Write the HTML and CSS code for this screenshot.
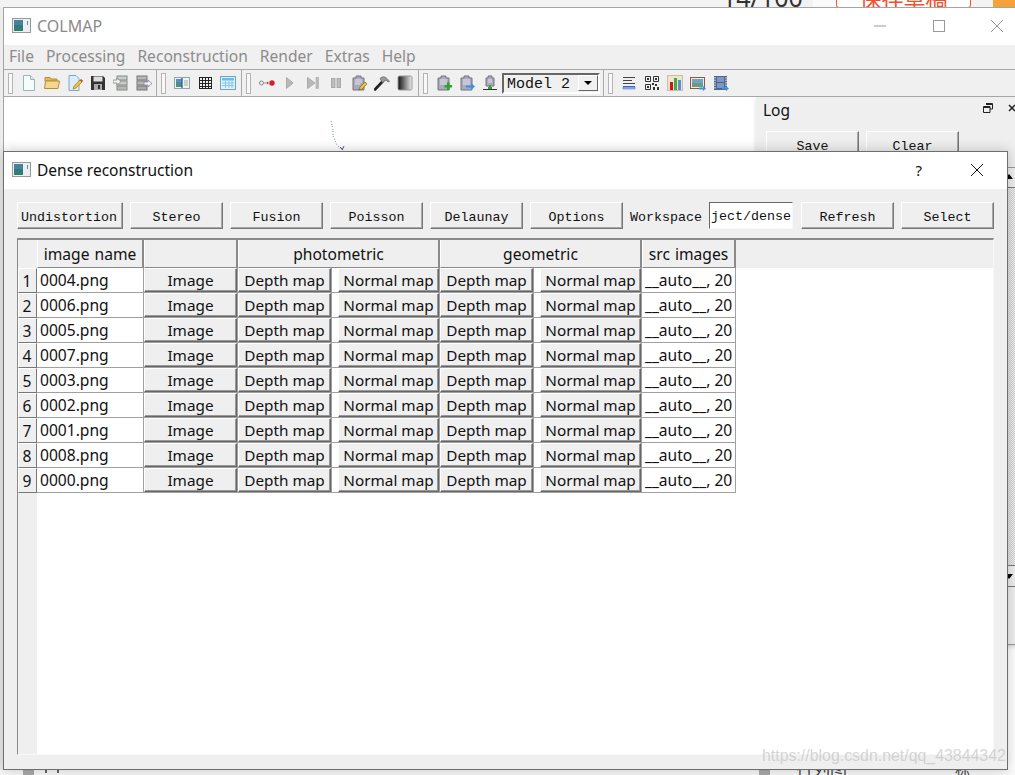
FILE: index.html
```html
<!DOCTYPE html>
<html lang="en">
<head>
  <meta charset="UTF-8" />
  <title>COLMAP</title>
  <link rel="stylesheet" href="styles.css">
</head>
<body>
  <!-- stuff behind the colmap window -->
  <div class="behind-top">
    <span class="behind-count">14/100</span>
    <span class="behind-sep"></span>
    <span class="behind-btn">保存草稿</span>
    <span class="behind-orange"></span>
  </div>

  <div class="main-win">
    <div class="titlebar">
      <svg class="app-icon" width="19" height="15" viewBox="0 0 19 15"><rect x=".5" y=".5" width="18" height="14" fill="#eee" stroke="#9a9a9a"/><rect x="2" y="2" width="9" height="11" fill="#2f7f74"/><rect x="2" y="2" width="9" height="5" fill="#4a7fa0"/><rect x="15" y="3" width="1" height="4" fill="#4aa0a0"/></svg>
      <span class="win-title main-title">COLMAP</span>
      <div class="win-ctrls">
        <svg width="12" height="12" viewBox="0 0 12 12"><path d="M0 6h12" stroke="#999"/></svg>
        <svg width="12" height="12" viewBox="0 0 12 12"><rect x=".5" y=".5" width="11" height="11" fill="none" stroke="#999"/></svg>
        <svg width="12" height="12" viewBox="0 0 12 12"><path d="M0 0l12 12M12 0L0 12" stroke="#999"/></svg>
      </div>
    </div>
    <div class="menubar">
      <span>File</span><span>Processing</span><span>Reconstruction</span><span>Render</span><span>Extras</span><span>Help</span>
    </div>
    <div class="toolbar">
      <div class="tb-group g1">
        <i class="handle"></i>
        <span class="tool"><svg viewBox="0 0 16 16"><path d="M2.500 .5h7l4 4v11h-11z" fill="#f6fbfb" stroke="#9db4b4"/><path d="M9.500 .5v4h4" fill="#dfe9e9" stroke="#9db4b4"/></svg></span>
        <span class="tool"><svg viewBox="0 0 16 16"><path d="M1 5V2.500h5l1 1.500h6v2H1z" fill="#e2b860" stroke="#b58c3a"/><path d="M.5 13.500l1-7.500h14l-1.500 7.500z" fill="#f5d68c" stroke="#b58c3a"/></svg></span>
        <span class="tool"><svg viewBox="0 0 16 16"><path d="M2 .5h7l3 3v12H2z" fill="#dcebf7" stroke="#7fa6c9"/><path d="M6 14l1-3 6-6 2 2-6 6z" fill="#f1c232" stroke="#8a6d1a" stroke-width=".6"/><path d="M13.500 4.500l2 2" stroke="#d33" stroke-width="1.600"/></svg></span>
        <span class="tool"><svg viewBox="0 0 16 16"><path d="M1 1h12l2 2v12H1z" fill="#333"/><rect x="3.500" y="1.500" width="9" height="5" fill="#dedede"/><rect x="4" y="9" width="8" height="6" fill="#aaa"/><rect x="8" y="10" width="2" height="4" fill="#333"/></svg></span>
        <span class="tool"><svg viewBox="0 0 16 16"><rect x="4" y="1" width="10" height="4" fill="#c8cfc8" stroke="#888"/><rect x="4" y="6" width="10" height="4" fill="#c8cfc8" stroke="#888"/><rect x="4" y="11" width="10" height="4" fill="#b4b9b4" stroke="#888"/><path d="M0 5h4V3l4 3.500L4 10V8H0z" fill="#f2f2f2" stroke="#888" stroke-width=".8"/></svg></span>
        <span class="tool"><svg viewBox="0 0 16 16"><rect x="1" y="1" width="10" height="4" fill="#b8b8b8" stroke="#777"/><rect x="1" y="6" width="10" height="4" fill="#b8b8b8" stroke="#777"/><rect x="1" y="11" width="10" height="4" fill="#a8a8a8" stroke="#777"/><path d="M8 7h4V5l4 3.500-4 3.500v-2H8z" fill="#f2f2f2" stroke="#889" stroke-width=".8"/></svg></span>
      </div>
      <div class="tb-group g2">
        <i class="handle"></i>
        <span class="tool"><svg viewBox="0 0 16 16"><rect x=".5" y="2.500" width="15" height="11" fill="#eef2f2" stroke="#8aa"/><rect x="2" y="4" width="6" height="8" fill="#4f8f80"/><rect x="2" y="4" width="6" height="3" fill="#5a8fc8"/><path d="M8 3v10" stroke="#1a55b0" stroke-width="1.200"/><path d="M10 6h4M10 8h4M10 10h4" stroke="#aaa"/></svg></span>
        <span class="tool"><svg viewBox="0 0 16 16"><path d="M2.500 2v12M5.500 2v12M8.500 2v12M11.500 2v12M14.500 2v12M2 2.500h13M2 5.500h13M2 8.500h13M2 11.500h13M2 13.500h13" stroke="#222" fill="none"/></svg></span>
        <span class="tool"><svg viewBox="0 0 16 16"><rect x=".5" y="1.500" width="15" height="13" fill="#dff1fb" stroke="#6aa7c4"/><rect x="2" y="3" width="12" height="2.500" fill="#6bbde6"/><path d="M2 8h12M2 10.500h12M5.500 5.500V13M9 5.500V13M12 5.500V13" stroke="#8bc6e6"/></svg></span>
      </div>
      <div class="tb-group g3">
        <i class="handle"></i>
        <span class="tool"><svg viewBox="0 0 16 16"><circle cx="2.500" cy="8" r="2" fill="#eee" stroke="#888"/><path d="M5 8h4" stroke="#999"/><path d="M8 6.500l2 1.500-2 1.500z" fill="#c33"/><circle cx="13" cy="8" r="2.700" fill="#d5202a"/></svg></span>
        <span class="tool"><svg viewBox="0 0 16 16"><path d="M4.500 2.500L11 8l-6.500 5.500z" fill="#b9b9b9" stroke="#aaa"/></svg></span>
        <span class="tool"><svg viewBox="0 0 16 16"><path d="M2.500 2.500L10 8l-7.500 5.500z" fill="#b9b9b9" stroke="#aaa"/><rect x="11" y="2.500" width="2.500" height="11" fill="#b9b9b9" stroke="#aaa" stroke-width=".6"/></svg></span>
        <span class="tool"><svg viewBox="0 0 16 16"><rect x="3.500" y="3.500" width="3.500" height="9" fill="#bbb" stroke="#aaa"/><rect x="9" y="3.500" width="3.500" height="9" fill="#bbb" stroke="#aaa"/></svg></span>
        <span class="tool"><svg viewBox="0 0 16 16"><path d="M2 15V3h3V1h5v2h3v12z" fill="#a9a9c0" stroke="#777"/><path d="M4 5h7M4 7h7M4 9h5" stroke="#e4e4ee"/><path d="M8 15l1-3 5-5 2 2-5 5z" fill="#f1c232" stroke="#6b5514" stroke-width=".6"/></svg></span>
        <span class="tool"><svg viewBox="0 0 16 16"><path d="M1 14.500L9 6" stroke="#222" stroke-width="2.600" stroke-linecap="round"/><path d="M6 3.500C9 .5 12 1.500 15.500 6.500L14 7C12 5 10.500 5 10 6.500L8.500 8z" fill="#9a9a9a" stroke="#555" stroke-width=".6"/></svg></span>
        <span class="tool"><svg viewBox="0 0 16 16"><defs><linearGradient id="grad"><stop offset="0" stop-color="#111"/><stop offset="1" stop-color="#eee"/></linearGradient></defs><rect x="1" y="1" width="14" height="14" rx="1.500" fill="url(#grad)" stroke="#999"/></svg></span>
      </div>
      <div class="tb-group g4">
        <i class="handle"></i>
        <span class="tool"><svg viewBox="0 0 16 16"><path d="M2 15V3h3V1h5v2h3v12z" fill="#a9a9c0" stroke="#777"/><path d="M4 5h7M4 7h7M4 9h7" stroke="#e4e4ee"/><path d="M11 7.500h2.500V10H16v2.500h-2.500V15H11v-2.500H8.500V10H11z" fill="#2aa52a"/></svg></span>
        <span class="tool"><svg viewBox="0 0 16 16"><path d="M2 15V3h3V1h5v2h3v12z" fill="#a9a9c0" stroke="#777"/><path d="M4 5h7M4 7h7M4 9h7" stroke="#e4e4ee"/><path d="M7 10.500h5V8l4 3.500-4 3.500v-2.500H7z" fill="#3f8fe0"/></svg></span>
        <span class="tool"><svg viewBox="0 0 16 16"><path d="M4 11V3h2V1h4v2h2v8z" fill="#a9a9c0" stroke="#777"/><path d="M6 5h4M6 7h4" stroke="#e4e4ee"/><path d="M8 10v3" stroke="#2aa52a" stroke-width="2"/><path d="M1 14.500h14" stroke="#333"/><rect x="6" y="12" width="4" height="2" fill="#2aa52a"/></svg></span>
        <div class="combo">
          <span class="combo-text">Model 2</span>
          <span class="combo-btn"><i></i></span>
        </div>
      </div>
      <div class="tb-group last">
        <i class="handle"></i>
        <span class="tool"><svg viewBox="0 0 16 16"><path d="M2 2.500h12M2 5.500h9M2 8.500h12" stroke="#444"/><path d="M2 11.500h12" stroke="#3a62c8"/><rect x="2" y="12" width="12" height="2" fill="#9bb8ee" stroke="#3a62c8" stroke-width=".5"/></svg></span>
        <span class="tool"><svg viewBox="0 0 16 16"><path d="M1.500 1.500h5v5h-5zM9.500 1.500h5v5h-5zM1.500 9.500h5v5h-5z" fill="none" stroke="#333"/><path d="M3 3h2v2H3zM11 3h2v2h-2zM3 11h2v2H3zM8 8h2v2H8zM11 9h2v2h-2zM9 12h2v3H9zM13 12h2v3h-2z" fill="#333"/></svg></span>
        <span class="tool"><svg viewBox="0 0 16 16"><rect x=".5" y=".5" width="15" height="15" fill="#efe5cf" stroke="#c9bfa8"/><rect x="3" y="7" width="3" height="8" fill="#d4141c"/><rect x="7" y="3" width="3" height="12" fill="#3fae45"/><rect x="11" y="5" width="3" height="10" fill="#5d8fd0"/></svg></span>
        <span class="tool"><svg viewBox="0 0 16 16"><rect x=".5" y="2.500" width="14" height="11" fill="#e6eef0" stroke="#96563a"/><rect x="2" y="4" width="11" height="4" fill="#6fa4c8"/><rect x="2" y="8" width="11" height="4" fill="#6d9a7d"/><path d="M9 12.500h4V11l3 2.500-3 2.500v-1.500H9z" fill="#3f8fe0"/></svg></span>
        <span class="tool"><svg viewBox="0 0 16 16"><rect x="1" y="1" width="13" height="14" fill="#4c6494"/><path d="M2 2v12M13 2v12" stroke="#ccd" stroke-width="1.500" stroke-dasharray="1.500 1"/><rect x="4" y="2" width="7" height="5" fill="#7f97b8"/><rect x="4" y="8" width="7" height="5" fill="#7f97b8"/><path d="M9 12.500h4V11l3 2.500-3 2.500v-1.500H9z" fill="#3f8fe0"/></svg></span>
      </div>
    </div>
    <div class="main-body">
      <svg class="cloud" width="20" height="32" viewBox="0 0 20 32"><path d="M1 1l1 4M2 6l1 4M3 11l0 4M3 16l2 4M5 21l2 4M8 26l2 3" stroke="#7788bb" stroke-dasharray="1 2" fill="none"/><path d="M10 27l3 3M14 26l-2 4" stroke="#445599"/></svg>
      <div class="log-dock">
        <div class="log-head">
          <span class="log-title">Log</span>
          <svg class="log-float" width="10" height="10" viewBox="0 0 10 10"><path d="M3 .5h6.500V6H7M.5 3.500H7v6H.5z" fill="#efefef" stroke="#222"/><path d="M3 1.500h6.500M.5 4.500H7" stroke="#222"/></svg>
          <svg class="log-x" width="8" height="8" viewBox="0 0 8 8"><path d="M1 1l6 6M7 1L1 7" stroke="#222" stroke-width="1.500"/></svg>
        </div>
        <div class="log-btns"><span class="qbtn log-btn">Save</span><span class="qbtn log-btn">Clear</span></div>
        <div class="log-scroll-head"><i class="arrow-up"></i></div>
        <div class="log-scroll"></div>
        <div class="log-scroll-foot"><i class="arrow-down"></i></div>
      </div>
    </div>
  </div>

  <div class="behind-bottom">
    <span class="behind-block left"></span>
    <span class="behind-mark m1"></span>
    <span class="behind-mark m2"></span>
    <span class="behind-block"></span>
    <span class="behind-text">行列图</span>
    <span class="behind-text2">标</span>
  </div>

  <div class="dialog">
    <div class="titlebar">
      <svg class="app-icon" width="19" height="15" viewBox="0 0 19 15"><rect x=".5" y=".5" width="18" height="14" fill="#eee" stroke="#9a9a9a"/><rect x="2" y="2" width="9" height="11" fill="#2f7f74"/><rect x="2" y="2" width="9" height="5" fill="#4a7fa0"/><rect x="15" y="3" width="1" height="4" fill="#4aa0a0"/></svg>
      <span class="win-title">Dense reconstruction</span>
      <div class="dlg-ctrls">
        <span class="help">?</span>
        <svg width="12" height="12" viewBox="0 0 12 12"><path d="M0 0l12 12M12 0L0 12" stroke="#111"/></svg>
      </div>
    </div>
    <div class="dlg-body">
      <div class="dlg-actions">
        <span class="qbtn act-first">Undistortion</span>
        <span class="qbtn">Stereo</span>
        <span class="qbtn">Fusion</span>
        <span class="qbtn">Poisson</span>
        <span class="qbtn">Delaunay</span>
        <span class="qbtn">Options</span>
        <span class="ws-label">Workspace</span>
        <span class="ws-input">ject/dense</span>
        <span class="qbtn refresh">Refresh</span>
        <span class="qbtn">Select</span>
      </div>
      <div class="tbl">
        <div class="tbl-grid" id="grid">
          <div class="corner"></div>
          <div class="hd">image name</div>
          <div class="hd"></div>
          <div class="hd span2">photometric</div>
          <div class="hd span2">geometric</div>
          <div class="hd">src images</div>
        </div>
      </div>
    </div>
  </div>

  <div class="watermark">https://blog.csdn.net/qq_43844342</div>

  <script>
    const names = ['0004', '0006', '0005', '0007', '0003', '0002', '0001', '0008', '0000'];
    const grid = document.getElementById('grid');
    let html = '';
    names.forEach((n, i) => {
      html += `<div class="rownum">${i + 1}</div>`;
      html += `<div class="cell">${n}.png</div>`;
      html += `<div class="cell"><span class="cbtn">Image</span></div>`;
      html += `<div class="cell"><span class="cbtn">Depth map</span></div>`;
      html += `<div class="cell wide"><span class="cbtn">Normal map</span></div>`;
      html += `<div class="cell"><span class="cbtn">Depth map</span></div>`;
      html += `<div class="cell wide"><span class="cbtn">Normal map</span></div>`;
      html += `<div class="cell src">__auto__, 20</div>`;
    });
    grid.insertAdjacentHTML('beforeend', html);
  </script>
</body>
</html>
```

FILE: styles.css
```css
* {
  box-sizing: border-box;
}

html, body {
  height: 100%;
}

body {
  margin: 0;
  position: relative;
  width: 1015px;
  height: 775px;
  overflow: hidden;
  background: #ececec;
  font-family: "Noto Sans", sans-serif;
  color: #111;
}

/* desktop pieces peeking out around the windows */
.behind-top {
  position: absolute;
  top: 0;
  left: 0;
  right: 0;
  height: 8px;
  overflow: hidden;
  background: #f3f3f3;
}

.behind-count {
  position: absolute;
  left: 722px;
  top: -13px;
  font-size: 25px;
  color: #333;
  line-height: 20px;
}

.behind-sep {
  position: absolute;
  left: 813px;
  top: 0;
  width: 23px;
  height: 8px;
  background: #fafafa;
}

.behind-btn {
  position: absolute;
  left: 836px;
  top: -14px;
  width: 135px;
  height: 22px;
  border: 1px solid #f05a28;
  border-radius: 3px;
  background: #fff;
  font-family: "Noto Sans CJK SC", sans-serif;
  font-size: 22px;
  line-height: 20px;
  text-align: center;
  color: #f0502c;
}

.behind-orange {
  position: absolute;
  left: 993px;
  top: 0;
  width: 22px;
  height: 8px;
  background: #f7a13a;
}

.behind-bottom {
  position: absolute;
  left: 0;
  right: 0;
  top: 770px;
  height: 5px;
  overflow: hidden;
  background: #fafafa;
}

.behind-block {
  position: absolute;
  left: 759px;
  top: 0;
  width: 11px;
  height: 5px;
  background: #aaa;
}

.behind-block.left {
  left: 23px;
}

.behind-mark {
  position: absolute;
  top: 0;
  width: 2px;
  height: 3px;
  background: #666;
}

.m1 {
  left: 45px;
}

.m2 {
  left: 57px;
}

.behind-text {
  position: absolute;
  left: 796px;
  top: -5px;
  font-family: "Noto Sans CJK SC", sans-serif;
  font-size: 17px;
  line-height: 6px;
  color: #444;
}

.behind-text2 {
  position: absolute;
  left: 955px;
  top: -4px;
  font-family: "Noto Sans CJK SC", sans-serif;
  font-size: 15px;
  line-height: 6px;
  color: #444;
}

.main-win {
  position: absolute;
  left: 3px;
  top: 7px;
  width: 1020px;
  height: 770px;
  border: 1px solid #a4a4a4;
  background: #fff;
  display: flex;
  flex-direction: column;
}

.titlebar {
  height: 37px;
  flex: none;
  display: flex;
  align-items: center;
  padding-left: 8px;
  padding-bottom: 2px;
  background: #fff;
}

.app-icon {
  flex: none;
  margin-right: 6px;
}

.win-title {
  font-size: 15.5px;
  color: #111;
}

.main-title {
  font-size: 16px;
  color: #8a8a8a;
}

.win-ctrls {
  margin-left: auto;
  display: flex;
  gap: 46.5px;
  padding-right: 19px;
}

.win-ctrls svg {
  display: block;
}

.menubar {
  height: 24px;
  flex: none;
  background: #f0f0f0;
  display: flex;
  align-items: center;
  gap: 12px;
  padding-left: 5px;
  padding-bottom: 2px;
  font-size: 15.6px;
  color: #8c8c8c;
}

.toolbar {
  height: 28px;
  flex: none;
  display: flex;
  background: #f0f0f0;
  border-top: 1px solid #a8a8a8;
  border-bottom: 1px solid #a8a8a8;
}

.tb-group {
  display: flex;
  align-items: center;
  padding-left: 4px;
  border-right: 1px solid #a8a8a8;
  height: 100%;
}

.g1 {
  padding-right: 1px;
}

.g2, .g3 {
  padding-right: 2px;
}

.g4 {
  padding-right: 3px;
}

.tb-group.last {
  border-right: 0;
}

.handle {
  width: 5px;
  height: 21px;
  border: 1px solid #b4b4b4;
  background: #f8f8f8;
  margin-right: 4px;
}

.tool {
  width: 23px;
  height: 22px;
  display: flex;
  align-items: center;
  justify-content: center;
}

.tool svg {
  width: 16px;
  height: 16px;
}

.combo {
  width: 98px;
  height: 21px;
  margin-left: 1px;
  display: flex;
  align-items: center;
  border: 2px solid;
  border-color: #666 #fff #fff #666;
  background: #f0f0f0;
  justify-content: space-between;
  padding-right: 0;
}

.combo-text {
  font-family: "Liberation Mono", monospace;
  font-size: 15px;
  padding-left: 3px;
  padding-top: 3px;
  color: #111;
}

.combo-btn {
  width: 20px;
  height: 16px;
  background: #f0f0f0;
  border: 1px solid;
  border-color: #fff #666 #666 #fff;
  display: flex;
  align-items: center;
  justify-content: center;
}

.combo-btn i {
  width: 0;
  height: 0;
  border-left: 4px solid transparent;
  border-right: 4px solid transparent;
  border-top: 4px solid #000;
}

.main-body {
  flex: 1;
  position: relative;
  background: #fff;
}

.cloud {
  position: absolute;
  left: 326px;
  top: 23px;
}

.log-dock {
  position: absolute;
  left: 752px;
  top: 0;
  width: 268px;
  height: 548px;
  background: #efefef;
  border-bottom: 1px solid #999;
  box-shadow: 0 2px 4px rgba(0, 0, 0, 0.15);
  padding: 0 8px;
}

.log-head {
  height: 34px;
  position: relative;
}

.log-title {
  position: absolute;
  left: -1px;
  top: 2px;
  font-size: 15.5px;
}

.log-float {
  position: absolute;
  left: 219px;
  top: 6px;
}

.log-x {
  position: absolute;
  left: 244px;
  top: 7px;
}

.log-btns {
  display: flex;
  gap: 7px;
  padding-left: 2px;
}

.log-btn {
  width: 93px;
  height: 28px;
}

.log-scroll-head {
  position: absolute;
  left: 248px;
  top: 70px;
  width: 20px;
  height: 21px;
  background: #efefef;
  border-top: 1px solid #999;
  border-bottom: 1px solid #777;
}

.log-scroll {
  position: absolute;
  left: 248px;
  top: 91px;
  width: 20px;
  height: 377px;
  background: repeating-conic-gradient(#d4d4d4 0 25%, #f0f0f0 0 50%) 0 0 / 2px 2px;
}

.arrow-up {
  position: absolute;
  top: 6px;
  left: 1px;
  border-left: 4px solid transparent;
  border-right: 4px solid transparent;
  border-bottom: 5px solid #000;
}

.log-scroll-foot {
  position: absolute;
  left: 248px;
  top: 468px;
  width: 20px;
  height: 22px;
  background: #efefef;
  border-top: 1px solid #777;
  border-bottom: 1px solid #777;
}

.arrow-down {
  position: absolute;
  top: 8px;
  left: 1px;
  border-left: 4px solid transparent;
  border-right: 4px solid transparent;
  border-top: 5px solid #000;
}

/* dialog */
.dialog {
  position: absolute;
  left: 3px;
  top: 151px;
  width: 1005px;
  height: 619px;
  border: 1px solid #6f6f6f;
  background: #efefef;
  display: flex;
  flex-direction: column;
  box-shadow: 0 0 12px rgba(0, 0, 0, 0.22);
}

.dlg-ctrls {
  margin-left: auto;
  display: flex;
  align-items: center;
  gap: 49px;
  padding-right: 24px;
}

.help {
  font-size: 15px;
}

.dlg-body {
  flex: 1;
  display: flex;
  flex-direction: column;
  padding: 13px 13px 14px 13px;
  min-height: 0;
  background: #efefef;
}

.dlg-actions {
  display: flex;
  align-items: center;
  height: 27px;
  gap: 7px;
  flex: none;
}

.qbtn {
  width: 93px;
  height: 27px;
  flex: none;
  display: flex;
  align-items: center;
  justify-content: center;
  padding-top: 3px;
  background: #efefef;
  border: 1px solid;
  border-color: #fff #777 #777 #fff;
  box-shadow: inset -1px -1px 0 #a8a8a8;
  font-family: "Liberation Mono", monospace;
  font-size: 13.33px;
  color: #111;
}

.act-first {
  width: 106px;
  padding-right: 2px;
}

.refresh {
  margin-left: 1px;
}

.ws-label {
  font-family: "Liberation Mono", monospace;
  font-size: 13.33px;
  flex: none;
  padding-top: 3px;
}

.ws-input {
  width: 84px;
  height: 27px;
  flex: none;
  background: #fff;
  border: 1px solid;
  border-color: #666 #f8f8f8 #f8f8f8 #666;
  padding-left: 1px;
  font-family: "Liberation Mono", monospace;
  font-size: 13.33px;
  line-height: 27px;
  overflow: hidden;
  white-space: nowrap;
}

.tbl {
  margin-top: 9px;
  flex: 1;
  min-height: 0;
  border-style: solid;
  border-width: 2px 1px 1px 1px;
  border-color: #8a8a8a #f8f8f8 #f8f8f8 #8a8a8a;
  background: #fff;
  position: relative;
  overflow: hidden;
}

.tbl-grid {
  display: grid;
  grid-template-columns: 19px 107px 94px 94px 108px 94px 108px 94px;
  grid-auto-rows: 25px;
  grid-template-rows: 28px;
  width: 100%;
  height: 100%;
  align-content: start;
  background: linear-gradient(to right, #efefef 19px, transparent 19px);
}

.corner {
  background: #efefef;
}

.hd {
  background: #efefef;
  border-left: 1px solid #fff;
  border-right: 2px solid #8a8a8a;
  border-bottom: 1px solid #8a8a8a;
  display: flex;
  align-items: center;
  justify-content: center;
  font-size: 15.6px;
  word-spacing: 1px;
}

.span2 {
  grid-column: span 2;
}

.tbl-grid::before {
  content: "";
  position: absolute;
  left: 718px;
  top: 0;
  right: 0;
  height: 28px;
  background: #efefef;
}

.rownum {
  background: #efefef;
  border: 1px solid;
  border-color: #fff #777 #777 #fff;
  display: flex;
  align-items: center;
  justify-content: center;
  padding-top: 1px;
  padding-right: 1px;
  font-size: 15.6px;
}

.cell {
  display: flex;
  align-items: center;
  border-right: 1px solid #a0a0a0;
  border-bottom: 1px solid #a0a0a0;
  font-size: 15.6px;
  padding-left: 3px;
  background: #fff;
}

.cell.src {
  padding-left: 3px;
  white-space: nowrap;
  overflow: hidden;
}

.cell.wide {
  justify-content: flex-end;
  padding-left: 0;
}

.cbtn {
  height: 24px;
  width: 93px;
  flex: none;
  margin-left: -3px;
  display: flex;
  align-items: center;
  justify-content: center;
  background: #efefef;
  border: 1px solid;
  border-color: #fff #666 #666 #fff;
  box-shadow: inset -1px -1px 0 #999;
  font-size: 15.3px;
  white-space: nowrap;
}

.cell.wide .cbtn {
  width: 101px;
  margin-left: 0;
}

.watermark {
  position: absolute;
  left: 762px;
  top: 747px;
  font-family: "Liberation Sans", sans-serif;
  font-size: 15.9px;
  color: rgba(195, 195, 195, 0.7);
  white-space: nowrap;
}
```
